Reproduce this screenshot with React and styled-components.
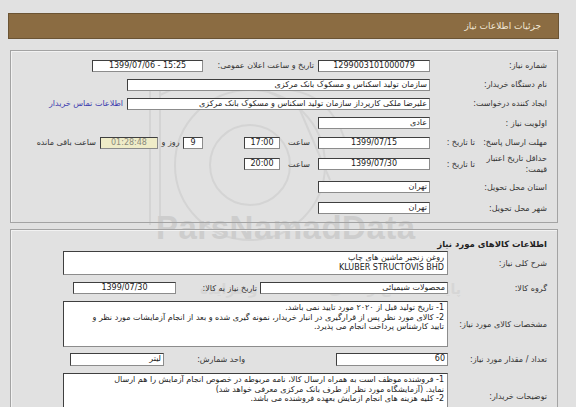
import React from "react";
import styled, { createGlobalStyle } from "styled-components";

const Global = createGlobalStyle`
  html, body { margin: 0; padding: 0; background: #e1e1e1; }
  body { font-family: Tahoma, "DejaVu Sans", sans-serif; color: #222; }
  #root { width: 576px; height: 407px; }
`;

const Page = styled.div`
  position: relative;
  width: 576px;
  height: 407px;
  overflow: hidden;
  box-sizing: border-box;
  padding: 13px 17px 0 8px;
  background: #e1e1e1;
  direction: rtl;
`;

const Header = styled.div`
  height: 26px;
  box-sizing: border-box;
  background: #8b6c42;
  border: 1px solid #6b5434;
  display: flex;
  align-items: center;
  padding-right: 17px;
  color: #f1e8d6;
  font-size: 9px;
`;

const Panel = styled.div`
  position: relative;
  z-index: 1;
  margin: ${(p) => p.$mt}px 1px 0 2px;
  border: 1px solid #a3a3a3;
  box-shadow: inset 1px 1px 0 #f2f2f2;
  box-sizing: border-box;
  height: ${(p) => p.$h}px;
  padding: ${(p) => p.$pt}px 10px 0 0;
`;

const Row = styled.div`
  display: flex;
  align-items: center;
  height: ${(p) => p.$h}px;
  margin-top: ${(p) => p.$mt || 0}px;
  font-size: 8px;
`;

const Label = styled.div`
  flex: none;
  width: ${(p) => p.$w}px;
  text-align: right;
  line-height: 11px;
  white-space: nowrap;
  color: #333;
`;

const SplitLabel = styled.div`
  flex: none;
  width: 113px;
  display: flex;
  align-items: center;
  color: #333;
  white-space: nowrap;
`;

const SplitMain = styled.div`
  width: 67px;
  text-align: right;
  line-height: 11px;
`;

const SplitSub = styled.div`
  margin-right: 5px;
`;

const Title = styled.div`
  font-size: 8.5px;
  font-weight: bold;
  color: #222;
  line-height: 12px;
  height: 12px;
  text-align: right;
`;

const Caption = styled.div`
  flex: none;
  width: ${(p) => (p.$w ? `${p.$w}px` : "auto")};
  margin-right: ${(p) => p.$gap || 0}px;
  text-align: ${(p) => p.$align || "right"};
  white-space: nowrap;
  color: #333;
`;

const Link = styled.a`
  margin-right: 4px;
  color: #3a3aae;
  white-space: nowrap;
  text-decoration: none;
`;

const Field = styled.div`
  flex: none;
  box-sizing: border-box;
  width: ${(p) => p.$w}px;
  height: ${(p) => p.$h || 12}px;
  margin-right: ${(p) => p.$gap || 0}px;
  border: 1px solid;
  border-color: #3f3f3f #8c8c8c #8c8c8c #3f3f3f;
  background: ${(p) => (p.$tint ? "#efecc8" : "#fff")};
  color: ${(p) => (p.$tint ? "#8a8a7c" : "#222")};
  text-align: ${(p) => p.$align || "center"};
  direction: ${(p) => (p.$ltr ? "ltr" : "rtl")};
  padding: ${(p) => (p.$multi ? "1px 3px" : "0 2px")};
  font-size: 8px;
  line-height: ${(p) => (p.$multi ? "9.6px" : "10px")};
  white-space: nowrap;
  overflow: hidden;
`;

const Line = styled.div`
  white-space: nowrap;
`;

const Watermark = styled.div`
  position: absolute;
  inset: 0;
  z-index: 0;
  pointer-events: none;
  direction: ltr;
`;

const Brand = styled.div`
  position: absolute;
  left: 156px;
  top: 209px;
  font-family: "Liberation Sans", Arial, sans-serif;
  font-weight: bold;
  font-size: 33px;
  color: #cdcdcd;
  letter-spacing: 0.5px;
`;

const FaintText = styled.div`
  position: absolute;
  left: ${(p) => p.$x}px;
  top: ${(p) => p.$y}px;
  font-family: "DejaVu Sans", sans-serif;
  font-size: ${(p) => p.$s}px;
  font-weight: ${(p) => (p.$b ? "bold" : "normal")};
  color: #d6d6d6;
  white-space: nowrap;
  direction: rtl;
`;

export default function App() {
  return (
    <>
      <Global />
      <Page>
        <Watermark>
          <svg width="576" height="407" style={{ position: "absolute", left: 0, top: 0 }}>
            <g fill="none" stroke="#d4d4d4" strokeWidth="2">
              <line x1="150" y1="90" x2="150" y2="225" />
              <line x1="160" y1="90" x2="160" y2="225" />
              <circle cx="250" cy="165" r="75" />
              <circle cx="250" cy="165" r="40" />
              <path d="M160 95 Q 230 60 300 110" />
              <path d="M300 110 L 330 180" />
              <path d="M290 90 Q 330 95 345 140" />
            </g>
          </svg>
          <Brand>ParsNamadData</Brand>
          <FaintText $x={160} $y={252} $s={15}>اطلاعات پارس نماد داده</FaintText>
          <FaintText $x={200} $y={281} $s={14} $b>پایگاه اطلاع رسانی مناقصات و مزایده</FaintText>
          <FaintText $x={185} $y={306} $s={24} $b>۰۲۱-۸۸۳۴۹۶۷۰</FaintText>
        </Watermark>

        <Header>جزئیات اطلاعات نیاز</Header>

        <Panel $mt={11} $h={173} $pt={5}>
          <Row $h={19}>
            <Label $w={113}>شماره نیاز:</Label>
            <Field $w={112} $gap={4}>1299003101000079</Field>
            <Caption $w={108} $gap={4}>تاریخ و ساعت اعلان عمومی:</Caption>
            <Field $w={111} $gap={3} $ltr>1399/07/06 - 15:25</Field>
          </Row>
          <Row $h={19}>
            <Label $w={113}>نام دستگاه خریدار:</Label>
            <Field $w={303} $gap={4} $align="right">سازمان تولید اسکناس و مسکوک بانک مرکزی</Field>
          </Row>
          <Row $h={19}>
            <Label $w={113}>ایجاد کننده درخواست:</Label>
            <Field $w={303} $gap={4} $align="right">علیرضا ملکی کارپرداز سازمان تولید اسکناس و مسکوک بانک مرکزی</Field>
            <Link href="#">اطلاعات تماس خریدار</Link>
          </Row>
          <Row $h={20}>
            <Label $w={113}>اولویت نیاز :</Label>
            <Field $w={112} $gap={4} $align="right">عادی</Field>
          </Row>
          <Row $h={19}>
            <SplitLabel>
              <SplitMain>مهلت ارسال پاسخ:</SplitMain>
              <SplitSub>تا تاریخ :</SplitSub>
            </SplitLabel>
            <Field $w={112} $gap={4} $ltr>1399/07/15</Field>
            <Caption $w={30} $gap={4} $align="center">ساعت</Caption>
            <Field $w={36} $gap={4} $ltr>17:00</Field>
            <Field $w={20} $gap={41}>9</Field>
            <Caption $w={19} $gap={3} $align="center">روز و</Caption>
            <Field $w={58} $gap={3} $tint $ltr>01:28:48</Field>
            <Caption $gap={4}>ساعت باقی مانده</Caption>
          </Row>
          <Row $h={24}>
            <SplitLabel>
              <SplitMain>
                حداقل تاریخ اعتبار
                <br />
                قیمت:
              </SplitMain>
              <SplitSub>تا تاریخ :</SplitSub>
            </SplitLabel>
            <Field $w={112} $gap={4} $ltr>1399/07/30</Field>
            <Caption $w={30} $gap={4} $align="center">ساعت</Caption>
            <Field $w={36} $gap={4} $ltr>20:00</Field>
          </Row>
          <Row $h={22}>
            <Label $w={113}>استان محل تحویل:</Label>
            <Field $w={112} $gap={4} $align="right">تهران</Field>
          </Row>
          <Row $h={20}>
            <Label $w={113}>شهر محل تحویل:</Label>
            <Field $w={112} $gap={4} $align="right">تهران</Field>
          </Row>
        </Panel>

        <Panel $mt={6} $h={200} $pt={8}>
          <Title>اطلاعات کالاهای مورد نیاز</Title>
          <Row $h={24} $mt={1}>
            <Label $w={95}>شرح کلی نیاز:</Label>
            <Field $w={385} $h={24} $gap={4} $align="right" $multi>
              <Line>روغن زنجیر ماشین های چاپ</Line>
              <Line>KLUBER STRUCTOVIS BHD</Line>
            </Field>
          </Row>
          <Row $h={12} $mt={7}>
            <Label $w={95}>گروه کالا:</Label>
            <Field $w={188} $gap={4} $align="right">محصولات شیمیائی</Field>
            <Caption $w={68} $gap={3}>تاریخ نیاز به کالا:</Caption>
            <Field $w={103} $gap={13} $ltr>1399/07/30</Field>
          </Row>
          <Row $h={46} $mt={7}>
            <Label $w={95}>مشخصات کالای مورد نیاز:</Label>
            <Field $w={385} $h={46} $gap={4} $align="right" $multi>
              <Line>1- تاریخ تولید قبل از ۲۰۲۰ مورد تایید نمی باشد.</Line>
              <Line>2- کالای مورد نظر پس از قرارگیری در انبار خریدار، نمونه گیری شده و بعد از انجام آزمایشات مورد نظر و</Line>
              <Line>تایید کارشناس پرداخت انجام می پذیرد.</Line>
            </Field>
          </Row>
          <Row $h={13} $mt={6}>
            <Label $w={95}>تعداد / مقدار مورد نیاز:</Label>
            <Field $w={112} $h={13} $gap={4} $align="right">60</Field>
            <Caption $w={55} $gap={91}>واحد شمارش:</Caption>
            <Field $w={94} $h={13} $gap={26} $align="right">لیتر</Field>
          </Row>
          <Row $h={46} $mt={7}>
            <Label $w={95}>توضیحات خریدار:</Label>
            <Field $w={385} $h={46} $gap={4} $align="right" $multi>
              <Line>1- فروشنده موظف است به همراه ارسال کالا، نامه مربوطه در خصوص انجام آزمایش را هم ارسال</Line>
              <Line>نماید. (آزمایشگاه مورد نظر از طرف بانک مرکزی معرفی خواهد شد)</Line>
              <Line>2- کلیه هزینه های انجام ازمایش بعهده فروشنده می باشد.</Line>
            </Field>
          </Row>
        </Panel>
      </Page>
    </>
  );
}
